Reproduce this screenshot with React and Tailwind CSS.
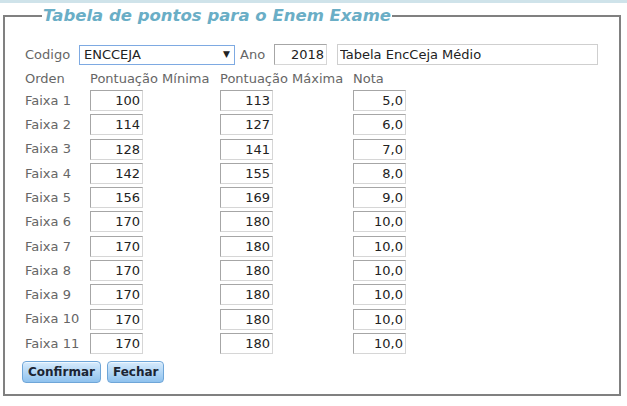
import React from "react";

const faixas = [
  ["100", "113", "5,0"],
  ["114", "127", "6,0"],
  ["128", "141", "7,0"],
  ["142", "155", "8,0"],
  ["156", "169", "9,0"],
  ["170", "180", "10,0"],
  ["170", "180", "10,0"],
  ["170", "180", "10,0"],
  ["170", "180", "10,0"],
  ["170", "180", "10,0"],
  ["170", "180", "10,0"],
];

const Campo = ({ valor }) => (
  <input
    readOnly
    value={valor}
    className="h-[21px] w-[53px] border border-[#a6a6a6] border-r-[#d6d6d6] border-b-[#d6d6d6] bg-white pr-[2px] text-right text-[13px] text-[#222] outline-none"
  />
);

const Botao = ({ children }) => (
  <button className="h-[22px] rounded-[4px] border border-[#6fa6d8] bg-gradient-to-b from-[#d7ebfc] to-[#8fc2ee] px-[5px] text-[12px] font-bold text-[#1b2533] shadow-[inset_0_1px_0_#eef7ff]">
    {children}
  </button>
);

export default function App() {
  return (
    <div className="min-h-screen bg-white font-['DejaVu_Sans',Verdana,sans-serif] text-[13px]">
      <div className="h-[3px] bg-[#cfe3ea]" />
      <div className="pl-[3px]">
        <fieldset className="w-[618px] h-[393px] border-2 border-[#808080] pl-[20px]">
          <legend className="ml-[17px] px-[1px] text-[16.5px] font-bold italic leading-[26px] text-[#6aaec6]">
            Tabela de pontos para o Enem Exame
          </legend>

          <div className="mt-[15px] flex items-center">
            <span className="w-[54px] text-[#666]">Codigo</span>
            <div className="flex h-[20px] w-[156px] items-center justify-between border border-[#7eaae2] px-[4px] text-[#222]">
              <span>ENCCEJA</span>
              <span className="text-[9px] text-[#222]">▼</span>
            </div>
            <span className="ml-[5px] w-[34px] text-[#666]">Ano</span>
            <Campo valor="2018" />
            <input
              readOnly
              value="Tabela EncCeja Médio"
              className="ml-[10px] h-[21px] w-[261px] border border-[#cfcfcf] px-[2px] text-[13px] text-[#222] outline-none"
            />
          </div>

          <div className="mt-[5px] grid grid-cols-[65px_130px_133px_100px] text-[#666] leading-[18px]">
            <span>Orden</span>
            <span>Pontuação Mínima</span>
            <span>Pontuação Máxima</span>
            <span>Nota</span>
          </div>

          <div className="mt-[2px] grid grid-cols-[65px_130px_133px_100px] gap-y-[3.3px]">
            {faixas.map(([min, max, nota], i) => (
              <React.Fragment key={i}>
                <span className="flex items-center text-[#666]">Faixa {i + 1}</span>
                <Campo valor={min} />
                <Campo valor={max} />
                <Campo valor={nota} />
              </React.Fragment>
            ))}
          </div>

          <div className="mt-[7px] -ml-[3px] flex gap-[6px]">
            <Botao>Confirmar</Botao>
            <Botao>Fechar</Botao>
          </div>
        </fieldset>
      </div>
    </div>
  );
}
